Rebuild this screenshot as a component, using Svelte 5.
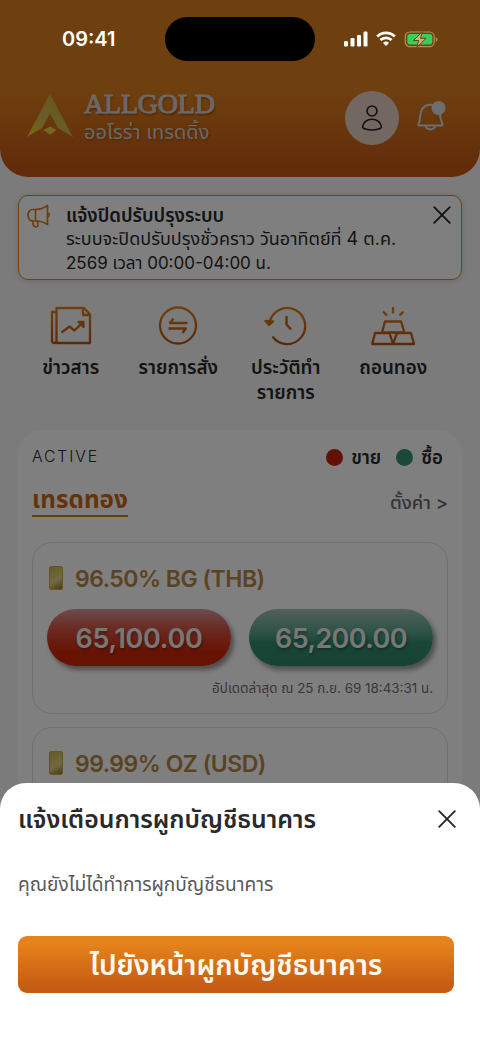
<script lang="ts">
	type Product = { name: string; sell: string; buy: string; updated: string };

	const menu = [
		{ icon: 'news', label: 'ข่าวสาร' },
		{ icon: 'orders', label: 'รายการสั่ง' },
		{ icon: 'history', label: 'ประวัติทำ รายการ' },
		{ icon: 'gold', label: 'ถอนทอง' },
	];

	const products: Product[] = [
		{ name: '96.50% BG (THB)', sell: '65,100.00', buy: '65,200.00', updated: 'อัปเดตล่าสุด ณ 25 ก.ย. 69 18:43:31 น.' },
		{ name: '99.99% OZ (USD)', sell: '', buy: '', updated: '' },
	];

	let showNotice = $state(true);
	let showSheet = $state(true);
</script>

{#snippet cross()}
	<svg width="18" height="18" viewBox="0 0 18 18" fill="none" stroke="#242428" stroke-width="1.8" stroke-linecap="round">
		<path d="M1.2 1.2 16.8 16.8M16.8 1.2 1.2 16.8" />
	</svg>
{/snippet}

<div class="screen">
	<header class="header">
		<div class="brand">
			<svg width="46" height="44" viewBox="0 0 46 44">
				<defs>
					<linearGradient id="logo" x1="0" y1="1" x2="1" y2="0">
						<stop offset="0" stop-color="#f2cc1c" />
						<stop offset=".45" stop-color="#cfba58" />
						<stop offset="1" stop-color="#d6a812" />
					</linearGradient>
				</defs>
				<path d="M23 0 46 43 31 34 23 19.500 15 34 0 43Z" fill="url(#logo)" />
				<path d="M23 32.500 29.500 36 23 40.500 16.500 36Z" fill="#ecce40" />
			</svg>
			<div class="brand-text">
				<span class="brand-name">ALLGOLD</span>
				<span class="brand-sub">ออโรร่า เทรดดิ้ง</span>
			</div>
		</div>
		<button class="avatar" aria-label="โปรไฟล์">
			<svg width="22" height="28" viewBox="0 0 22 28" fill="none" stroke="#2b1c1a" stroke-width="1.6">
				<circle cx="11" cy="7" r="5" />
				<path d="M1.500 23C2 18.500 6 15.300 11 15.300S20 18.500 20.500 23C20.600 24.500 16 26 11 26S1.400 24.500 1.500 23Z" />
			</svg>
		</button>
		<button class="bell" aria-label="แจ้งเตือน">
			<svg width="30" height="32" viewBox="0 0 30 32" fill="none" stroke="#dddde1" stroke-width="2" stroke-linejoin="round">
				<path d="M2 25.500C1.300 25.500 1 24.500 1.600 23.500C4 19.500 2 14 5 9.500C7 5.700 10.500 4.700 14 4.700C20 4.700 22.500 9 23 14.500C23.200 19 24 21 25.300 23.500C25.800 24.500 25.500 25.500 24.500 25.500Z" />
				<path d="M8.500 25.500C10 30.700 17 30.700 18.500 25.500" />
				<circle cx="21.500" cy="8" r="7" fill="#dddde1" stroke="none" />
			</svg>
		</button>
	</header>

	{#if showNotice}
		<section class="notice">
			<svg class="horn" width="25" height="24" viewBox="0 0 25 24" fill="none" stroke="#d97f1c" stroke-width="1.700" stroke-linejoin="round" stroke-linecap="round">
				<path d="M8.500 5.500H6C3 5.500 1 8 1 11.300S3 17 6 17H8.500ZM8.500 5.500C13 5.500 17 4 20.500 1.500V20.500C17 18 13 17 8.500 17" />
				<path d="M5.500 17 6.300 21C6.800 23.500 11.200 23.300 10.900 21L10.500 17.200M20.500 9C22.800 9.300 22.800 12.700 20.500 13" />
			</svg>
			<div class="notice-text">
				<strong>แจ้งปิดปรับปรุงระบบ</strong>
				<p>ระบบจะปิดปรับปรุงชั่วคราว วันอาทิตย์ที่ 4 ต.ค.</p>
				<p class="when">2569 เวลา 00:00-04:00 น.</p>
			</div>
			<button class="close" aria-label="ปิด" onclick={() => (showNotice = false)}>{@render cross()}</button>
		</section>
	{/if}

	<svg class="defs" width="0" height="0">
		<linearGradient id="amber" gradientUnits="userSpaceOnUse" x1="0" y1="0" x2="0" y2="40">
			<stop offset="0" stop-color="#dd831e" />
			<stop offset="1" stop-color="#b84f0e" />
		</linearGradient>
	</svg>

	<nav class="menu">
		{#each menu as item}
			<button class="menu-item">
				<svg width="44" height="40" viewBox="0 0 44 40" fill="none" stroke="url(#amber)" stroke-width="2.300" stroke-linejoin="round">
					{#if item.icon === 'news'}
						<path d="M7.500 2H35L41 8.500V37H7.500ZM34 2V9H41M7.500 6H3V34.500Q3 37 5.200 37T7.500 34.500" />
						<path d="M12.500 26.500 20.500 20.500 25.500 24.500 33 17" />
						<path d="M29.500 16H34.500V21Z" fill="url(#amber)" />
					{:else if item.icon === 'orders'}
						<circle cx="22" cy="19.500" r="18" />
						<path d="M31.500 17H14L17.500 12.500M12.500 22.500H30L26.500 27" />
					{:else if item.icon === 'history'}
						<path d="M5.500 16.500A18 18 0 1 1 8.500 30.500" />
						<path d="M1.500 15 5 18.800 9 15.500Z" fill="url(#amber)" />
						<path d="M22.500 10V18.500L27 23.500" stroke-width="2.600" />
					{:else}
						<path d="M14 15.500H30L33.500 26.500H11ZM4 27H18.500L22 38H1.200ZM26 27H40L43 38H22Z" />
						<path d="M22 1V7.500M12 5.500 16 9.500M32.500 5.500 28.500 9.500" />
					{/if}
				</svg>
				<span>{item.label}</span>
			</button>
		{/each}
	</nav>

	<main class="panel">
		<div class="row">
			<span class="active">ACTIVE</span>
			<div class="legend">
				<span class="dot sell"></span><b>ขาย</b>
				<span class="dot buy"></span><b>ซื้อ</b>
			</div>
		</div>
		<div class="row tabs">
			<h2>เทรดทอง</h2>
			<span class="settings">ตั้งค่า &gt;</span>
		</div>
		{#each products as product}
			<article class="product">
				<div class="product-head">
					<span class="bar"></span>
					<h3>{product.name}</h3>
				</div>
				{#if product.sell}
					<div class="prices">
						<button class="price sell">{product.sell}</button>
						<button class="price buy">{product.buy}</button>
					</div>
					<p class="updated">{product.updated}</p>
				{/if}
			</article>
		{/each}
	</main>

	{#if showSheet}
		<div class="backdrop"></div>
		<div class="sheet" role="dialog" aria-modal="true">
			<div class="sheet-head">
				<h1>แจ้งเตือนการผูกบัญชีธนาคาร</h1>
				<button class="close" aria-label="ปิด" onclick={() => (showSheet = false)}>{@render cross()}</button>
			</div>
			<p class="sheet-body">คุณยังไม่ได้ทำการผูกบัญชีธนาคาร</p>
			<button class="primary">ไปยังหน้าผูกบัญชีธนาคาร</button>
		</div>
	{/if}

	<div class="status">
		<span class="time">09:41</span>
		<span class="island"></span>
		<div class="signals">
			<svg width="24" height="16" viewBox="0 0 24 16" fill="#fff">
				<rect x="0" y="10" width="4" height="5.500" rx="1.200" />
				<rect x="6.500" y="7" width="4" height="8.500" rx="1.200" />
				<rect x="13" y="4" width="4" height="11.500" rx="1.200" />
				<rect x="19.500" y="0.500" width="4" height="15" rx="1.200" />
			</svg>
			<svg width="20" height="16" viewBox="0 0 20 16" fill="none" stroke="#fff" stroke-width="2.700">
				<path d="M1.200 5.400A12.800 12.800 0 0 1 18.800 5.400M4.400 9A8.200 8.200 0 0 1 15.600 9" />
				<path d="M10 15 7 12A4.300 4.300 0 0 1 13 12Z" fill="#fff" stroke="none" />
			</svg>
			<svg width="34" height="17" viewBox="0 0 34 17">
				<rect x="1.200" y="1" width="29" height="14.600" rx="4.600" fill="none" stroke="#bd8d57" stroke-width="1.200" />
				<rect x="3.300" y="3" width="25" height="10.600" rx="2.800" fill="#35cf5b" />
				<path d="M31.800 6V11Q33.500 10 33.500 8.500T31.800 6Z" fill="#bd8d57" />
				<path d="M18.500 .5 9.500 9.500H14.700L12.700 16.500 22 7.300H16.500Z" fill="#cfae82" stroke="#6f400f" stroke-width="1" />
			</svg>
		</div>
	</div>
</div>

<style>
	:global(body) {
		background: #f7f7f7;
	}

	.screen {
		position: relative;
		width: 480px;
		height: 1044px;
		overflow: hidden;
		background: #f7f7f7;
		color: #29292b;
		font-family: Inter, 'Noto Sans Thai', 'Noto Sans', sans-serif;
	}

	button {
		border: 0;
		padding: 0;
		background: none;
		color: inherit;
		font: inherit;
	}

	svg {
		display: block;
		flex: none;
	}

	h1,
	h2,
	h3,
	p {
		margin: 0;
	}

	.defs {
		position: absolute;
	}

	.header {
		box-sizing: border-box;
		height: 177px;
		padding: 91px 33px 0 27px;
		display: flex;
		align-items: flex-start;
		background: linear-gradient(#de801e 50%, #c55814 95%);
		border-radius: 0 0 28px 28px;
	}

	.brand {
		flex: 1;
		display: flex;
		gap: 11px;
		padding-top: 3px;
	}

	.brand-text {
		display: flex;
		flex-direction: column;
		color: #d7d0ce;
		white-space: nowrap;
	}

	.brand-name {
		margin-top: -4px;
		font: 400 28px/28px 'Liberation Serif', serif;
		letter-spacing: -0.2px;
		-webkit-text-stroke: 1px #d7d0ce;
		text-shadow: 1px 2px 2px #8b4c12;
	}

	.brand-sub {
		font-size: 20px;
		line-height: 29px;
		text-shadow: 1px 1px 2px #8b4c12;
	}

	.avatar {
		width: 54px;
		height: 54px;
		display: grid;
		place-items: center;
		background: #e6cec2;
		border-radius: 50%;
	}

	.bell {
		width: 30px;
		margin: 9px 0 0 18px;
	}

	.notice {
		box-sizing: border-box;
		height: 85px;
		margin: 18px 18px 0;
		padding: 7px 10px 0 8px;
		display: flex;
		align-items: flex-start;
		background: #fff;
		border: 1.5px solid #df8621;
		border-radius: 10px;
		box-shadow: 0 1px 7px #0002;
	}

	.horn {
		margin-top: 1px;
	}

	.notice-text {
		flex: 1;
		margin-left: 14px;
		font-size: 18px;
		line-height: 24px;
		white-space: nowrap;
	}

	.notice-text strong {
		display: block;
		font-size: 18.6px;
		font-weight: 600;
	}

	.notice-text .when {
		font-size: 17px;
	}

	.notice .close {
		margin-top: 3px;
	}

	.menu {
		display: grid;
		grid-template-columns: repeat(4, 1fr);
		height: 124px;
		margin: 26px 33px 0 17px;
	}

	.menu-item {
		display: flex;
		flex-direction: column;
		align-items: center;
		font-size: 18.8px;
		font-weight: 600;
		line-height: 25px;
	}

	.menu-item span {
		width: 86px;
		text-align: center;
		margin-top: 9px;
	}

	.panel {
		box-sizing: border-box;
		height: 640px;
		margin: 0 18px;
		padding: 14px;
		background: #fff;
		border-radius: 24px;
	}

	.row {
		height: 26px;
		display: flex;
		align-items: center;
		justify-content: space-between;
	}

	.active {
		margin-top: -2px;
		font-size: 15.7px;
		font-weight: 300;
		letter-spacing: 1.9px;
	}

	.legend {
		display: flex;
		align-items: center;
		padding-top: 2px;
		padding-right: 5px;
		font-size: 18.6px;
	}

	.legend b {
		font-weight: 600;
	}

	.dot {
		width: 17px;
		height: 17px;
		margin-top: -1px;
		margin-right: 8px;
		border-radius: 50%;
	}

	.legend b + .dot {
		margin-left: 15px;
	}

	.dot.sell {
		background: #c42508;
	}

	.dot.buy {
		background: #349272;
	}

	.tabs {
		height: 33px;
		margin-top: 14px;
	}

	.tabs h2 {
		box-sizing: border-box;
		height: 33px;
		border-bottom: 2.5px solid #d97718;
		color: #c96718;
		font-size: 24.3px;
		font-weight: 700;
		line-height: 30px;
	}

	.settings {
		margin-top: 5px;
		color: #66666a;
		font-size: 18.4px;
		font-weight: 500;
	}

	.product {
		box-sizing: border-box;
		height: 172px;
		margin-top: 25px;
		padding: 22px 14px 0;
		border: 1.5px solid #e0e0e2;
		border-radius: 20px;
	}

	.product + .product {
		margin-top: 13px;
	}

	.product-head {
		height: 27px;
		display: flex;
		align-items: center;
		gap: 12px;
		padding-left: 2px;
	}

	.bar {
		width: 14px;
		height: 24px;
		margin-top: -2px;
		background: linear-gradient(150deg, #cdb43d, #e4d38a 60%, #94731c);
		border: 1px solid #c8ad48;
		border-radius: 2px;
		box-sizing: border-box;
	}

	.product h3 {
		color: #b48743;
		font-size: 23px;
		font-weight: 600;
		letter-spacing: -0.5px;
	}

	.prices {
		display: flex;
		gap: 18px;
		margin-top: 17px;
	}

	.price {
		width: 184px;
		height: 57px;
		padding-top: 1px;
		border-radius: 29px;
		color: #eee;
		font-size: 27px;
		font-weight: 600;
		letter-spacing: -0.6px;
		text-shadow: 1px 2px 3px #0005;
		box-shadow: 3px 4px 5px #0006;
	}

	.price.sell {
		background: linear-gradient(#d6989a, #d65a4a 32%, #ce2608 75%);
		letter-spacing: -0.3px;
	}

	.price.buy {
		background: linear-gradient(#a6c2b8, #58a48b 42%, #318b6e 60%, #2e8669);
	}

	.updated {
		margin-top: 12px;
		color: #707074;
		font-size: 13.4px;
		line-height: 20px;
		text-align: right;
		white-space: nowrap;
	}

	.backdrop {
		position: absolute;
		inset: 0;
		background: rgba(0, 0, 0, 0.5);
	}

	.sheet {
		position: absolute;
		left: 0;
		right: 0;
		bottom: 0;
		box-sizing: border-box;
		height: 261px;
		padding: 20px 24px 0 18px;
		background: #fff;
		border-radius: 26px 26px 0 0;
		white-space: nowrap;
	}

	.sheet-head {
		height: 32px;
		display: flex;
		align-items: center;
		justify-content: space-between;
	}

	.sheet-head h1 {
		font-size: 24.8px;
		font-weight: 600;
		line-height: 32px;
	}

	.sheet-body {
		margin-top: 36px;
		color: #59595c;
		font-size: 19.1px;
		line-height: 26px;
	}

	.primary {
		width: 436px;
		height: 57px;
		margin-top: 39px;
		padding-top: 4px;
		border-radius: 9px;
		background: linear-gradient(#e4821b 15%, #c65b13 90%);
		color: #fffaf0;
		font-size: 28.2px;
		font-weight: 600;
	}

	.status {
		position: absolute;
		top: 17px;
		left: 0;
		width: 480px;
		height: 44px;
		display: grid;
		grid-template-columns: 165px 150px 1fr;
		align-items: center;
		color: #fff;
	}

	.time {
		padding-left: 62px;
		font-size: 20px;
		font-weight: 600;
	}

	.island {
		height: 44px;
		border-radius: 22px;
		background: #000;
	}

	.signals {
		display: flex;
		align-items: center;
		gap: 8px;
		padding-left: 29px;
	}
</style>
